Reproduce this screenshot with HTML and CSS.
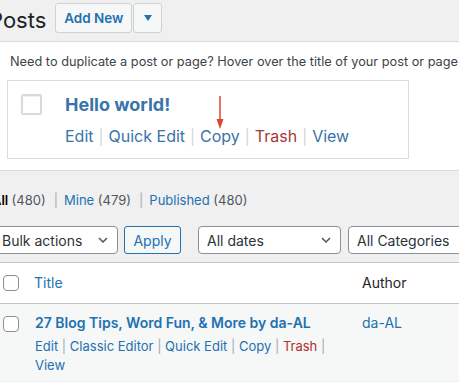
FILE: index.html
```html
<!DOCTYPE html>
<html lang="en">
<head>
  <meta charset="UTF-8">
  <title>Posts</title>
  <link rel="stylesheet" href="styles.css">
</head>
<body>
  <header class="page-head">
    <h1>Posts</h1>
    <div class="split-btn">
      <a class="btn btn-add" href="#">Add New</a>
      <button class="btn btn-caret" type="button">
        <svg width="8" height="6" viewBox="0 0 8 6"><polygon points="0,0 8,0 4,6" fill="#2271b1"/></svg>
      </button>
    </div>
  </header>

  <section class="notice">
    <p>Need to duplicate a post or page? Hover over the title of your post or page in the list below.</p>
    <div class="demo">
      <span class="demo-check"></span>
      <div class="demo-body">
        <a class="demo-title" href="#">Hello world!</a>
        <div class="demo-actions">
          <a href="#">Edit</a><span class="sep">|</span><a href="#">Quick Edit</a><span class="sep">|</span><a class="copy" href="#">Copy<svg class="arrow" width="8" height="33" viewBox="0 0 8 33"><line x1="4" y1="0" x2="4" y2="25" stroke="#e2452d" stroke-width="1.5"/><polygon points="0.5,23 7.5,23 4,33" fill="#e2452d"/></svg></a><span class="sep">|</span><a class="trash" href="#">Trash</a><span class="sep">|</span><a href="#">View</a>
        </div>
      </div>
    </div>
  </section>

  <section class="list">
    <ul class="subsubsub">
      <li class="current">All <span class="count">(480)</span></li>
      <li><a href="#">Mine</a> <span class="count">(479)</span></li>
      <li><a href="#">Published</a> <span class="count">(480)</span></li>
    </ul>

    <div class="tablenav">
      <div class="select select-bulk"><span>Bulk actions</span><svg width="10" height="6" viewBox="0 0 10 6"><polyline points="1,1 5,5 9,1" fill="none" stroke="#50575e" stroke-width="1.5"/></svg></div>
      <button class="btn-apply" type="button">Apply</button>
      <div class="select select-dates"><span>All dates</span><svg width="10" height="6" viewBox="0 0 10 6"><polyline points="1,1 5,5 9,1" fill="none" stroke="#50575e" stroke-width="1.5"/></svg></div>
      <div class="select select-cats"><span>All Categories</span><svg width="10" height="6" viewBox="0 0 10 6"><polyline points="1,1 5,5 9,1" fill="none" stroke="#50575e" stroke-width="1.5"/></svg></div>
    </div>

    <table class="posts">
      <thead>
        <tr>
          <td class="check-col"><span class="cb"></span></td>
          <th class="title-col"><a href="#">Title</a></th>
          <th class="author-col">Author</th>
        </tr>
      </thead>
      <tbody>
        <tr>
          <td class="check-col"><span class="cb"></span></td>
          <td class="title-col">
            <a class="row-title" href="#">27 Blog Tips, Word Fun, &amp; More by da-AL</a>
            <div class="row-actions">
              <a href="#">Edit</a> <span class="sep">|</span> <a href="#">Classic Editor</a> <span class="sep">|</span> <a href="#">Quick Edit</a> <span class="sep">|</span> <a href="#">Copy</a> <span class="sep">|</span> <a class="trash" href="#">Trash</a> <span class="sep">|</span> <a href="#">View</a>
            </div>
          </td>
          <td class="author-col"><a href="#">da-AL</a></td>
        </tr>
      </tbody>
    </table>
  </section>
</body>
</html>
```

FILE: styles.css
```css
body {
  margin: 0;
  font-family: Inter, "Liberation Sans", sans-serif;
  color: #3c434a;
  background-color: #f0f0f1;
  overflow: hidden;
}

a {
  text-decoration: none;
  color: #2271b1;
}

/* top bar */
.page-head {
  display: flex;
  align-items: center;
  gap: 9px;
  height: 41px;
  border-bottom: 1px solid #dcdcde;
}

.page-head h1 {
  margin: 0 0 2px -11px;
  font-size: 22px;
  font-weight: 400;
  color: #1d2327;
}

.split-btn {
  display: flex;
  gap: 1px;
  margin-bottom: 6px;
}

.btn {
  box-sizing: border-box;
  height: 30px;
  border: 1px solid #d0d1d4;
  border-radius: 3px;
  background-color: #f6f7f7;
  display: flex;
  align-items: center;
  justify-content: center;
}

.btn-add {
  width: 77px;
  font-size: 13.5px;
  font-weight: 600;
  color: #2271b1;
}

.btn-caret {
  width: 29px;
  padding: 0;
}

/* duplicate notice */
.notice {
  background-color: #fff;
  padding: 10px 0 11px 7px;
  border-bottom: 1px solid #dcdcde;
}

.notice p {
  margin: 0 0 8px;
  padding-left: 3px;
  font-size: 12.75px;
  line-height: 20px;
  white-space: nowrap;
}

.demo {
  box-sizing: border-box;
  width: 402px;
  height: 79px;
  border: 1px solid #dcdcde;
  display: flex;
  gap: 23px;
  padding: 13px 0 0 13px;
}

.demo-check {
  box-sizing: border-box;
  width: 21px;
  height: 21px;
  border: 2px solid #dadada;
  border-radius: 2px;
  box-shadow: inset 0 1px 1px rgba(0, 0, 0, 0.06);
}

.demo-body {
  margin-top: -1px;
}

.demo-title {
  display: block;
  font-size: 18px;
  font-weight: 700;
  line-height: 24px;
  color: #3874aa;
}

.demo-actions {
  margin-top: 7px;
  font-size: 16px;
  line-height: 24px;
  white-space: nowrap;
}

.demo-actions a {
  color: #3874aa;
}

.demo-actions .sep {
  color: #d4d4d4;
  margin: 0 5px;
  font-size: 15px;
}

.demo-actions .trash {
  color: #a83737;
}

.copy {
  position: relative;
}

.arrow {
  position: absolute;
  left: 50%;
  bottom: 100%;
  margin-left: -4px;
  margin-bottom: -3px;
}

/* list screen */
.list {
  padding-top: 19px;
}

.subsubsub {
  list-style: none;
  margin: 0 0 0 -8px;
  padding: 0;
  display: flex;
  font-size: 13px;
  line-height: 20px;
  white-space: nowrap;
}

.subsubsub li + li::before {
  content: "|";
  color: #a7aaad;
  margin: 0 6px 0 8px;
}

.subsubsub .current {
  font-weight: 600;
  color: #000;
}

.subsubsub .count {
  font-weight: 400;
  color: #50575e;
}

.tablenav {
  display: flex;
  margin: 16px 0 8px -7px;
  height: 28px;
  white-space: nowrap;
}

.select {
  box-sizing: border-box;
  height: 28px;
  border: 1px solid #8c8f94;
  border-radius: 4px;
  background-color: #fff;
  color: #2c3338;
  font-size: 14px;
  display: flex;
  align-items: center;
  justify-content: space-between;
  padding: 0 9px 0 8px;
  flex-shrink: 0;
}

.select-bulk {
  width: 125px;
}

.btn-apply {
  box-sizing: border-box;
  height: 28px;
  width: 57px;
  margin-left: 6px;
  border: 1px solid #2271b1;
  border-radius: 3px;
  background-color: #f6f7f7;
  color: #2271b1;
  font-family: inherit;
  font-size: 14px;
  flex-shrink: 0;
}

.select-dates {
  width: 143px;
  margin-left: 17px;
}

.select-cats {
  width: 170px;
  margin-left: 7px;
}

.posts {
  width: 530px;
  border-collapse: collapse;
  table-layout: fixed;
}

.posts thead tr {
  background-color: #fff;
  border-top: 1px solid #c3c4c7;
  border-bottom: 1px solid #c3c4c7;
}

.posts tbody tr {
  background-color: #f6f7f7;
}

.posts th,
.posts td {
  text-align: left;
  vertical-align: top;
  font-size: 14px;
  font-weight: 400;
}

.posts thead th {
  height: 40px;
  padding: 0 10px 0 8px;
  vertical-align: middle;
  line-height: 20px;
}

.posts .check-col {
  width: 23px;
  padding: 0 0 0 3px;
}

.posts thead .check-col {
  vertical-align: middle;
}

.posts .title-col {
  width: 308px;
  padding-left: 8px;
  padding-right: 10px;
}

.posts .author-col {
  padding-left: 10px;
  color: #1d2327;
}

.posts tbody td {
  padding-top: 9px;
  padding-bottom: 6px;
  line-height: 20px;
}

.posts tbody .check-col {
  padding-top: 12px;
}

.cb {
  display: block;
  box-sizing: border-box;
  width: 16px;
  height: 16px;
  border: 1px solid #8c8f94;
  border-radius: 4px;
  background-color: #fff;
}

.row-title {
  display: block;
  font-weight: 600;
  margin-left: 1px;
}

.row-actions {
  margin-top: 4px;
  margin-left: 1px;
  font-size: 13px;
  line-height: 19px;
}

.row-actions .sep {
  color: #a7aaad;
}

.row-actions .trash {
  color: #b32d2e;
}
```
